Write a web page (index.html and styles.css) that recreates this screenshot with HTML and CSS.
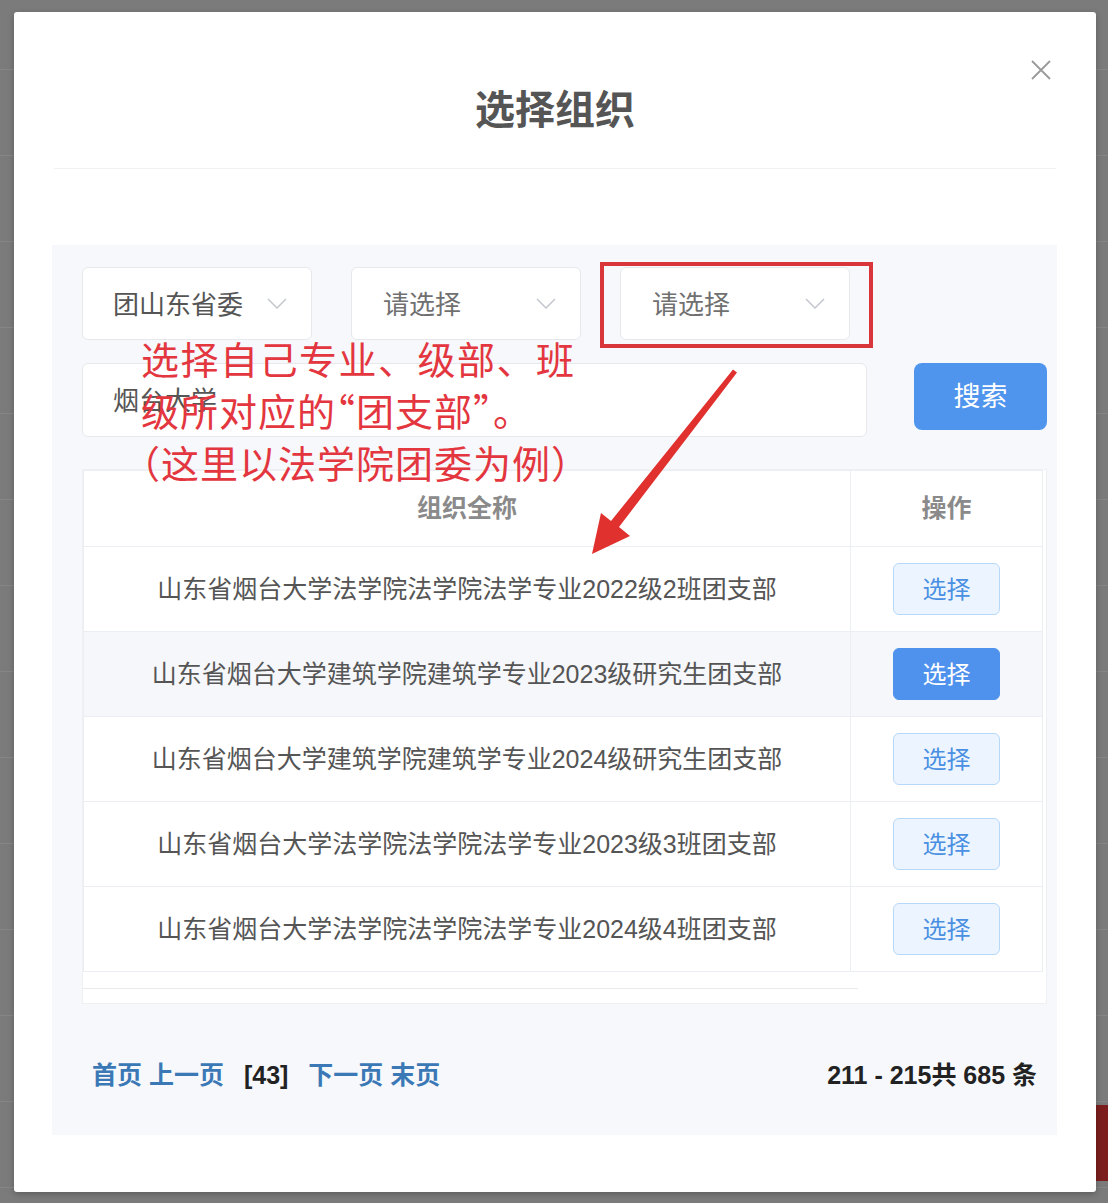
FILE: index.html
```html
<!DOCTYPE html>
<html lang="zh-CN">
<head>
  <meta charset="UTF-8" />
  <meta name="viewport" content="width=device-width, initial-scale=1.0">
  <title>选择组织</title>
  <link rel="stylesheet" href="styles.css">
</head>
<body>

  <div class="side-tab"></div>

  <div class="modal">
    <button class="close" aria-label="关闭">
      <svg width="22" height="22" viewBox="0 0 22 22"><path d="M2 2 L20 20 M20 2 L2 20" stroke="#9a9a9a" stroke-width="1.8" fill="none"/></svg>
    </button>

    <div class="modal-header">
      <h2>选择组织</h2>
    </div>

    <div class="panel">
      <div class="filters">
        <div class="select">
          <span>团山东省委</span>
          <svg class="chevron" width="20" height="11" viewBox="0 0 20 11"><polyline points="1,1 10,10 19,1" stroke="#c3c7ce" stroke-width="1.5" fill="none"/></svg>
        </div>
        <div class="select placeholder">
          <span>请选择</span>
          <svg class="chevron" width="20" height="11" viewBox="0 0 20 11"><polyline points="1,1 10,10 19,1" stroke="#c3c7ce" stroke-width="1.5" fill="none"/></svg>
        </div>
        <div class="select placeholder marked">
          <span>请选择</span>
          <svg class="chevron" width="20" height="11" viewBox="0 0 20 11"><polyline points="1,1 10,10 19,1" stroke="#c3c7ce" stroke-width="1.5" fill="none"/></svg>
        </div>
      </div>

      <div class="search-row">
        <input class="keyword" type="text" value="烟台大学" />
        <button class="btn-search">搜索</button>
      </div>

      <div class="table-wrap">
        <table>
          <thead>
            <tr><th class="col-name">组织全称</th><th class="col-op">操作</th></tr>
          </thead>
          <tbody>
            <tr><td>山东省烟台大学法学院法学院法学专业2022级2班团支部</td><td class="col-op"><button class="btn-pick">选择</button></td></tr>
            <tr class="hover"><td>山东省烟台大学建筑学院建筑学专业2023级研究生团支部</td><td class="col-op"><button class="btn-pick active">选择</button></td></tr>
            <tr><td>山东省烟台大学建筑学院建筑学专业2024级研究生团支部</td><td class="col-op"><button class="btn-pick">选择</button></td></tr>
            <tr><td>山东省烟台大学法学院法学院法学专业2023级3班团支部</td><td class="col-op"><button class="btn-pick">选择</button></td></tr>
            <tr><td>山东省烟台大学法学院法学院法学专业2024级4班团支部</td><td class="col-op"><button class="btn-pick">选择</button></td></tr>
          </tbody>
        </table>
        <div class="scrollbar"></div>
      </div>

      <div class="pager">
        <div class="pages">
          <a href="#">首页</a> <a href="#">上一页</a>
          <span class="current">[43]</span>
          <a href="#">下一页</a> <a href="#">末页</a>
        </div>
        <div class="total">211 - 215共 685 条</div>
      </div>
    </div>

    <div class="note">
      <div class="wide">选择自己专业、级部、班</div>
      <div>级所对应的<span class="half">“</span>团支部<span class="half">”</span>。</div>
      <div><span class="half">（</span>这里以法学院团委为例<span class="half">）</span></div>
    </div>

    <svg class="arrow" width="180" height="200" viewBox="0 0 180 200">
      <polygon points="153,9.5 31,161 21,153 12,194 50,176 39,167 157,12.5" fill="#e0312f"/>
    </svg>
  </div>

</body>
</html>
```

FILE: styles.css
```css
* {
  margin: 0;
  padding: 0;
  box-sizing: border-box;
}

html, body {
  width: 100%;
  height: 1203px;
  overflow: hidden;
}

body {
  position: relative;
  font-family: "Noto Sans CJK SC", sans-serif;
  background-color: #7b7b7b;
  background-image: repeating-linear-gradient(to bottom, transparent 0, transparent 69px, #868686 69px, #868686 70px, transparent 70px, transparent 86px);
}

.side-tab {
  position: absolute;
  right: 0;
  top: 1105px;
  width: 14px;
  height: 76px;
  background: #7c1e1e;
}

.modal {
  position: relative;
  width: 1082px;
  height: 1180px;
  margin: 12px 0 0 14px;
  background: #fff;
  border-radius: 3px;
  box-shadow: 0 2px 6px rgba(0,0,0,0.25);
}

.close {
  position: absolute;
  left: 1016px;
  top: 47px;
  width: 22px;
  height: 22px;
  border: none;
  background: none;
  cursor: pointer;
}

.close svg {
  display: block;
}

.modal-header {
  margin: 0 40px;
  padding: 67px 0 33px;
  border-bottom: 1px solid #f1f1f1;
  text-align: center;
}

.modal-header h2 {
  font-size: 40px;
  line-height: 56px;
  font-weight: bold;
  color: #555;
}

.panel {
  width: 1005px;
  height: 890px;
  margin: 76px 0 0 38px;
  padding: 22px 10px 0 30px;
  background: #f6f8fb;
}

.filters {
  display: flex;
  gap: 39px;
}

.select {
  position: relative;
  display: flex;
  align-items: center;
  justify-content: space-between;
  width: 230px;
  height: 73px;
  padding: 0 24px 3px 30px;
  background: #fff;
  border: 1px solid #e6e8ec;
  border-radius: 6px;
  font-size: 26px;
  color: #555;
}

.select .chevron {
  margin-top: 3px;
}

.select.placeholder {
  padding-left: 31px;
  color: #707070;
}

.select.marked::after {
  content: "";
  position: absolute;
  top: -6px;
  left: -21px;
  right: -24px;
  bottom: -9px;
  border: 4px solid #d8363b;
}

.search-row {
  display: flex;
  align-items: flex-start;
  margin-top: 23px;
}

.keyword {
  width: 785px;
  height: 74px;
  padding: 0 30px 4px;
  border: 1px solid #e6e8ec;
  border-radius: 6px;
  background: #fff;
  font-family: "Noto Sans CJK SC", sans-serif;
  font-size: 26px;
  color: #555;
  outline: none;
}

.btn-search {
  width: 133px;
  height: 67px;
  margin-left: 47px;
  padding-bottom: 4px;
  border: none;
  border-radius: 8px;
  background: #4f95ee;
  color: #fff;
  font-family: "Noto Sans CJK SC", sans-serif;
  font-size: 27px;
  cursor: pointer;
}

.table-wrap {
  width: 965px;
  margin-top: 32px;
  padding-right: 3px;
  background: #fff;
  border: 1px solid #eef0f3;
}

table {
  width: 960px;
  border-collapse: collapse;
  font-family: "Liberation Sans", "Noto Sans CJK SC", sans-serif;
}

th, td {
  border: 1px solid #ebeef2;
  text-align: center;
  padding-bottom: 5px;
}

th {
  height: 76px;
  font-size: 25px;
  font-weight: bold;
  color: #8a8a8a;
}

td {
  height: 85px;
  font-size: 25px;
  color: #555;
}

td.col-op {
  padding-bottom: 0;
}

.col-op {
  width: 192px;
}

tr.hover td {
  background: #f5f7fa;
}

.btn-pick {
  width: 107px;
  height: 52px;
  padding-bottom: 3px;
  border: 1px solid #b8d8fa;
  border-radius: 6px;
  background: #ecf5ff;
  color: #4a90e2;
  font-family: "Noto Sans CJK SC", sans-serif;
  font-size: 24px;
  cursor: pointer;
}

.btn-pick.active {
  background: #4f92ee;
  border-color: #4f92ee;
  color: #fff;
}

.scrollbar {
  width: 775px;
  height: 17px;
  border-bottom: 1px solid #e8eaed;
  margin-bottom: 14px;
}

.pager {
  display: flex;
  justify-content: space-between;
  align-items: center;
  height: 50px;
  margin-top: 44px;
  padding: 0 10px 0 10px;
  font-family: "Liberation Sans", "Noto Sans CJK SC", sans-serif;
  font-size: 25px;
  font-weight: bold;
  color: #222;
}

.pager a {
  color: #3b78b6;
  text-decoration: none;
}

.pager .current {
  margin: 0 13px;
}

.note {
  position: absolute;
  left: 127px;
  top: 320px;
  font-size: 38px;
  line-height: 52px;
  letter-spacing: 1px;
  color: #e3363f;
}

.note .wide {
  letter-spacing: 1.5px;
}

.note .half {
  font-feature-settings: "halt";
}

.arrow {
  position: absolute;
  left: 566px;
  top: 348px;
}
```
